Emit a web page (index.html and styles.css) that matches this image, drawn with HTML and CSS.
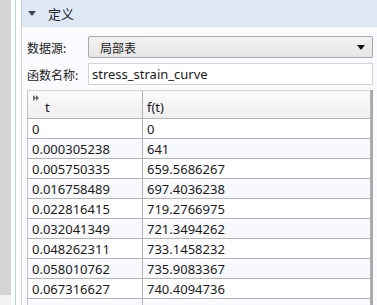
FILE: index.html
```html
<!DOCTYPE html>
<html>
<head>
<meta charset="utf-8">
<link rel="stylesheet" href="styles.css">
</head>
<body>
<div class="app">
  <div class="side">
    <div class="gray"></div>
  </div>
  <div class="gutter"><div class="vline"></div></div>
  <div class="panel">
    <div class="head"><span class="tri"></span><span class="title">定义</span></div>
    <div class="body">
      <div class="row">
        <span class="label">数据源:</span>
        <div class="select"><span>局部表</span><span class="arrow"></span></div>
      </div>
      <div class="row">
        <span class="label">函数名称:</span>
        <div class="input">stress_strain_curve</div>
      </div>
      <div class="tablewrap">
        <table class="grid">
          <thead>
            <tr><th class="c1"><span class="ff"><i></i><i></i></span><span class="ht">t</span></th><th class="c2"><span class="ht">f(t)</span></th></tr>
          </thead>
          <tbody>
            <tr><td>0</td><td>0</td></tr>
            <tr class="alt"><td>0.000305238</td><td>641</td></tr>
            <tr><td>0.005750335</td><td>659.5686267</td></tr>
            <tr class="alt"><td>0.016758489</td><td>697.4036238</td></tr>
            <tr><td>0.022816415</td><td>719.2766975</td></tr>
            <tr class="alt"><td>0.032041349</td><td>721.3494262</td></tr>
            <tr><td>0.048262311</td><td>733.1458232</td></tr>
            <tr class="alt"><td>0.058010762</td><td>735.9083367</td></tr>
            <tr><td>0.067316627</td><td>740.4094736</td></tr>
            <tr class="alt"><td></td><td></td></tr>
          </tbody>
        </table>
      </div>
    </div>
  </div>
</div>
</body>
</html>
```
FILE: styles.css
```css
* { box-sizing: border-box; }
html, body { margin: 0; padding: 0; }
body {
  width: 377px; height: 305px; overflow: hidden;
  font-family: "Noto Sans", "Noto Sans CJK SC", sans-serif;
  font-size: 12px; color: #1a1a1a; background: #fff;
}
.app { display: flex; height: 305px; overflow: hidden; }
.side { width: 11px; background: #f3f3f3; flex-shrink: 0; }
.gray { height: 295px; background: #d4d4d4; }
.gutter { width: 10px; background: #fff; padding-left: 4px; flex-shrink: 0; }
.vline { width: 1px; height: 100%; background: #b5cfee; }
.panel { flex: 1; border-left: 1px solid #cfcfcf; background: #fafbfe; display: flex; flex-direction: column; overflow: hidden; }
.head { height: 27px; flex-shrink: 0; background: #dde8f4; display: flex; align-items: center; padding-left: 6px; }
.tri { width: 0; height: 0; border-left: 4px solid transparent; border-right: 4px solid transparent; border-top: 5px solid #444; margin-right: 12px; }
.title { font-size: 13px; color: #222; font-family: "Noto Sans CJK SC", sans-serif; }
.body { padding: 9px 4px 0 5px; flex-shrink: 0; }
.row { display: flex; align-items: center; height: 22px; margin-bottom: 5px; }
.label { width: 61px; font-family: "Noto Sans CJK SC", sans-serif; font-size: 12px; }
.select { flex: 1; height: 22px; border: 1px solid #a8a8a8; border-radius: 2px; background: linear-gradient(#f2f2f2, #e6e6e6); display: flex; align-items: center; justify-content: space-between; padding: 0 7px 0 11px; font-family: "Noto Sans CJK SC", sans-serif; }
.arrow { width: 0; height: 0; border-left: 4px solid transparent; border-right: 4px solid transparent; border-top: 5px solid #111; }
.input { flex: 1; height: 22px; border: 1px solid #d4d4d4; background: #fff; display: flex; align-items: center; padding-left: 3px; font-size: 13px; }
.tablewrap { margin-top: 1px; border-right: 2px solid #a8a8a8; }
.grid { border-collapse: collapse; width: 100%; table-layout: fixed; }
.grid th, .grid td { border: 1px solid #b4b4b4; border-top: none; border-left: 1px solid #c4c4c4; padding: 0 0 0 4px; height: 20px; text-align: left; font-weight: normal; font-size: 13px; }
.grid th { height: 28px; background: linear-gradient(#fcfcfc, #eeeeee); border-top: 1px solid #d4d4d4; border-bottom: 1px solid #b4b4b4; position: relative; vertical-align: bottom; padding-bottom: 2px; }
.grid .c1 { width: 115px; }
.grid .c1 .ht { padding-left: 13px; }
.ff { position: absolute; left: 5px; top: 4px; display: flex; }
.ff i { width: 0; height: 0; border-top: 3px solid transparent; border-bottom: 3px solid transparent; border-left: 3px solid #666; }
.grid tr td { background: #fff; }
.grid tr.alt td { background: #f8f9fd; }
```
